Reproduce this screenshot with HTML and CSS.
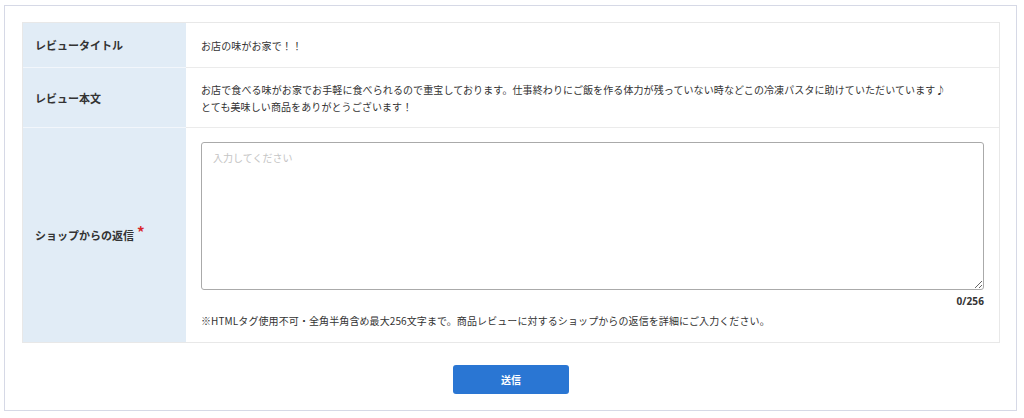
FILE: index.html
```html
<!DOCTYPE html>
<html lang="ja">
<head>
  <meta charset="UTF-8">
  <meta name="viewport" content="width=device-width, initial-scale=1.0">
  <title>レビュー返信</title>
  <link rel="stylesheet" href="styles.css">
</head>
<body>
  <div class="frame">
    <div class="review-table">
      <div class="row row-title">
        <div class="label">レビュータイトル</div>
        <div class="value">お店の味がお家で！！</div>
      </div>
      <div class="row row-body">
        <div class="label">レビュー本文</div>
        <div class="value">お店で食べる味がお家でお手軽に食べられるので重宝しております。仕事終わりにご飯を作る体力が残っていない時などこの冷凍パスタに助けていただいています♪<br>とても美味しい商品をありがとうございます！</div>
      </div>
      <div class="row row-reply">
        <div class="label">ショップからの返信<span class="required">*</span></div>
        <div class="value">
          <textarea class="reply" placeholder="入力してください"></textarea>
          <div class="counter">0/256</div>
          <p class="note">※HTMLタグ使用不可・全角半角含め最大256文字まで。商品レビューに対するショップからの返信を詳細にご入力ください。</p>
        </div>
      </div>
    </div>
    <div class="actions">
      <button class="submit">送信</button>
    </div>
  </div>
</body>
</html>
```

FILE: styles.css
```css
body {
  margin: 0;
  padding: 5px 7px 0 4px;
  font-family: "Noto Sans CJK JP", "Noto Sans", sans-serif;
  color: #333;
}

.frame {
  border: 1px solid #d6d9e6;
  padding: 16px 16px 16px 17px;
}

.review-table {
  border: 1px solid #e8e8e8;
}

.row {
  display: flex;
  border-top: 1px solid #ebebeb;
}

.row:first-child {
  border-top: none;
}

.label {
  width: 151px;
  flex-shrink: 0;
  padding-left: 12px;
  background: #e1ecf6;
  display: flex;
  align-items: center;
  font-size: 11px;
  font-weight: bold;
  border-top: 1px solid #f2f6fb;
  margin-top: -1px;
}

.row:first-child .label {
  border-top: none;
  margin-top: 0;
}

.required {
  color: #d9262b;
  font-size: 15px;
  position: relative;
  top: -4px;
  margin-left: 3px;
}

.value {
  flex: 1;
  padding: 0 15px;
  font-size: 10px;
  letter-spacing: 0.1px;
  line-height: 17px;
  display: flex;
  flex-direction: column;
  justify-content: center;
}

.row-title {
  height: 44px;
}

.row-body {
  height: 59px;
}

.row-reply .value {
  padding-top: 14px;
  padding-bottom: 13px;
  justify-content: flex-start;
}

.reply {
  display: block;
  box-sizing: border-box;
  width: 100%;
  height: 148px;
  margin: 0;
  padding: 7px 11px;
  border: 1px solid #aaa;
  border-radius: 3px;
  font-family: inherit;
  font-size: 10px;
  color: #333;
}

.reply::placeholder {
  color: #c4c4c4;
}

.counter {
  text-align: right;
  font-weight: bold;
  margin-top: 3px;
  font-family: "Open Sans", "Noto Sans CJK JP", sans-serif;
}

.note {
  margin: 2px 0 0;
}

.actions {
  display: flex;
  justify-content: center;
  padding-top: 22px;
}

.submit {
  width: 116px;
  height: 29px;
  border: none;
  border-radius: 3px;
  background: #2a76d3;
  color: #fff;
  font-family: inherit;
  font-size: 10px;
  font-weight: bold;
  cursor: pointer;
}
```
